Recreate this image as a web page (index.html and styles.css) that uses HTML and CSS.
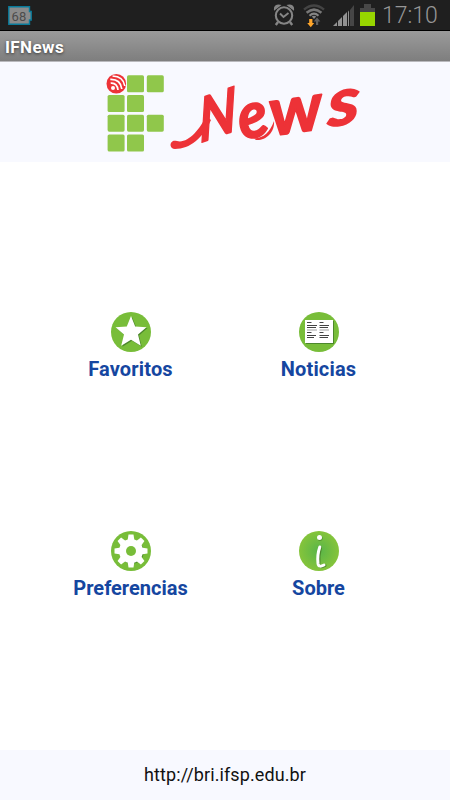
FILE: index.html
```html
<!DOCTYPE html>
<html lang="pt-BR">
<head>
    <meta charset="utf-8">
    <meta name="viewport" content="width=device-width, initial-scale=1">
    <title>IFNews</title>
    <link rel="stylesheet" href="styles.css">
</head>

<body>
    <div class="status-bar">
        <div class="battery-level">
            <svg width="24" height="20" viewBox="0 0 24 20">
                <path d="M.8 .8H21.5V5.5H23.2V14H21.5V18.2H.8Z" fill="#8b8b8b" stroke="#087b9b" stroke-width="1.4"/>
                <text x="3.6" y="14.5">68</text>
            </svg>
        </div>
        <div class="status-icons">
            <svg class="icon-alarm" width="22" height="24" viewBox="0 0 22 24" fill="none" stroke="#858585">
                <circle cx="11" cy="12.5" r="8.2" stroke-width="2.1"/>
                <path d="M7 10.5L10.5 14L15.5 10" stroke-width="1.9"/>
                <path d="M1.600 6.500C1.200 3 4 1.600 7 2.400ZM20.400 6.500C20.800 3 18 1.600 15 2.400Z" fill="#858585" stroke-width="1.400"/>
                <path d="M5 19L2.8 22M17 19L19.2 22" stroke-width="2.4"/>
            </svg>
            <svg class="icon-wifi" width="22" height="24" viewBox="0 0 22 24" fill="none">
                <path d="M1 5.6Q11-2.6 21 5.6" stroke="#444" stroke-width="2.5"/>
                <path d="M3.6 8.8Q11 2.4 18.4 8.8" stroke="#777" stroke-width="2.5"/>
                <path d="M6.5 11.7Q11 7.5 15.5 11.7" stroke="#858585" stroke-width="2.1"/>
                <path d="M8.8 12.5Q11 11 13.2 12.5L11 15Z" fill="#858585"/>
                <path d="M6.2 15H9.4V19H11.2L7.8 23.3L4.2 19H6.2Z" fill="#ffa62b"/>
                <path d="M13 21V17.5H10.7L14 13.5L17.4 17.5H15.2V21Z" fill="#606060"/>
            </svg>
            <svg class="icon-signal" width="22" height="22" viewBox="0 0 22 22">
                <path d="M0 21L4 17V21Z" fill="#929292"/>
                <path d="M5 21V16L9 12V21Z" fill="#929292"/>
                <path d="M10 21V11L14 7V21Z" fill="#929292"/>
                <path d="M15 21V6.5L16 5.5V21Z" fill="#929292"/>
                <path d="M17 21V5L21 0V21Z" fill="#464646"/>
            </svg>
            <svg class="icon-battery" width="16" height="23" viewBox="0 0 16 23">
                <path d="M4 0H11V4H15V8H0V4H4Z" fill="#484848"/>
                <path d="M0 8H15V22H0Z" fill="#97d500"/>
            </svg>
        </div>
        <span class="clock">17:10</span>
    </div>

    <div class="title-bar">IFNews</div>

    <header class="header">
        <svg class="logo" width="450" height="100" viewBox="0 62 450 100">
            <g fill="#90c74b">
                <rect x="127" y="75.3" width="17" height="17" rx="1.6"/>
                <rect x="146.8" y="75.3" width="17" height="17" rx="1.6"/>
                <rect x="107.6" y="95" width="17" height="17" rx="1.6"/>
                <rect x="127" y="95" width="17" height="17" rx="1.6"/>
                <rect x="107.6" y="114.7" width="17" height="17" rx="1.6"/>
                <rect x="127" y="114.7" width="17" height="17" rx="1.6"/>
                <rect x="146.8" y="114.7" width="17" height="17" rx="1.6"/>
                <rect x="107.6" y="134.5" width="17" height="17" rx="1.6"/>
                <rect x="127" y="134.5" width="17" height="17" rx="1.6"/>
            </g>
            <circle cx="116.3" cy="83.7" r="9.8" fill="#ed3237"/>
            <circle cx="113" cy="88" r="2" fill="#fff"/>
            <g fill="none" stroke="#fff" stroke-width="1.7">
                <path d="M110.7 83.2Q117 82.5 118 90"/>
                <path d="M110.3 79.4Q120.5 79 121.8 89"/>
                <path d="M112.5 76Q123.5 76.5 124.8 86"/>
            </g>
            <!-- tail of the N -->
            <path d="M173 141C169 143 170 149 175 149C190 149 203 138 211 120L206 116C200 130 187 144 177 141C175 140.500 174 140.500 173 141Z" fill="#ed3237"/>
            <g class="wordmark">
                <text transform="matrix(.86 -.3 .04 1.02 200 143)" font-size="60">N</text>
                <text transform="translate(242 140) rotate(-12) scale(1.02 1.08)" font-size="60">e</text>
                <text transform="translate(272 136) rotate(-8) scale(1.12 1.03)" font-size="65">w</text>
                <text transform="matrix(1.3 -.2 0 1.1 328 127)" font-size="60">s</text>
            </g>
            <!-- tail of the e -->
            <path d="M254 138.500C264 138 270 132 274 121C275 133 265 141 256 140Z" fill="#ed3237"/>
        </svg>
    </header>

    <main class="dashboard">
        <a class="item">
            <svg width="40" height="40" viewBox="0 0 40 40">
                <circle cx="20" cy="20" r="20" fill="#78bd39"/>
                <path d="M21 5L25.200 15.200L36.500 16L28 23.500L30.800 34.800L21 28.700L11.400 34.800L14 23.500L5.500 16L16.700 15.200Z" fill="#4c872c"/>
                <path d="M20 4L24.200 14.500L35.500 15.300L27 22.600L29.800 33.800L20 27.800L10.200 33.800L13 22.600L4.500 15.300L15.800 14.500Z" fill="#fff"/>
            </svg>
            <span class="label favoritos">Favoritos</span>
        </a>
        <a class="item">
            <svg width="40" height="40" viewBox="0 0 40 40">
                <circle cx="20" cy="20" r="20" fill="#78bd39"/>
                <path d="M7 9H35V32H7Z" fill="#4c872c"/>
                <path d="M6 8H34V31H6Z" fill="#fff"/>
                <g stroke="#444" stroke-width="1">
                    <path d="M8 10.500H12.500M8 13.500H18M8 15.500H17M20.500 10.500H24.500M20.500 13.500H30M20.500 15.500H29"/>
                    <path d="M8 20.500H12.500M8 23.500H17M8 25.500H15M20.500 20.500H24.500M20.500 23.500H30M20.500 25.500H29" />
                </g>
                <path d="M8 18H18M20.500 18H30" stroke="#888" stroke-width=".8"/>
            </svg>
            <span class="label noticias">Noticias</span>
        </a>
        <a class="item">
            <svg width="40" height="40" viewBox="0 0 40 40">
                <circle cx="20" cy="20" r="20" fill="#78bd39"/>
                <g fill="none" stroke="#4c872c" transform="translate(.8 .8)">
                    <circle cx="20" cy="20" r="8.500" stroke-width="7"/>
                </g>
                <g fill="#fff">
                    <g id="teeth">
                        <path id="tooth" d="M16.500 10L17.500 3.500H22.500L23.500 10Z"/>
                        <use href="#tooth" transform="rotate(90 20 20)"/>
                        <use href="#tooth" transform="rotate(180 20 20)"/>
                        <use href="#tooth" transform="rotate(270 20 20)"/>
                    </g>
                    <use href="#teeth" transform="rotate(45 20 20)"/>
                </g>
                <circle cx="20" cy="20" r="12" fill="#fff"/>
                <circle cx="20" cy="20" r="5" fill="#78bd39"/>
            </svg>
            <span class="label preferencias">Preferencias</span>
        </a>
        <a class="item">
            <svg width="40" height="40" viewBox="0 0 40 40">
                <defs>
                    <radialGradient id="info-fill">
                        <stop offset="0" stop-color="#58b548"/>
                        <stop offset="1" stop-color="#85c43b"/>
                    </radialGradient>
                </defs>
                <circle cx="20" cy="20" r="20" fill="url(#info-fill)"/>
                <circle cx="21" cy="7.300" r="2.500" fill="#4c872c"/>
                <circle cx="20.500" cy="6.500" r="2.500" fill="#fff"/>
                <path d="M21.500 16.500C20 22 19.500 28 20 33C20.500 36.500 23 36 26 34.500" fill="none" stroke="#4c872c" stroke-width="3" stroke-linecap="round"/>
                <path d="M20.800 16C19 21 18.500 28 19 32.500C19.500 36 22 35.500 25 34" fill="none" stroke="#fff" stroke-width="3" stroke-linecap="round"/>
            </svg>
            <span class="label sobre">Sobre</span>
        </a>
    </main>

    <footer class="footer">http://bri.ifsp.edu.br</footer>
</body>
</html>
```
FILE: styles.css
```css
* {
    box-sizing: border-box;
}

body {
    display: flex;
    flex-direction: column;
    height: 100vh;
    margin: 0;
    background: #fff;
    font-family: Roboto, sans-serif;
    overflow: hidden;
}

svg {
    display: block;
    flex-shrink: 0;
}

/* Android status bar */
.status-bar {
    display: flex;
    height: 31px;
    padding: 0 13px 0 8px;
    background: #1f1f1f;
    border-bottom: 1px solid #000;
}

.battery-level {
    padding-top: 6px;
}

.battery-level text {
    font-size: 13px;
    fill: #4c4c4c;
}

.status-icons {
    display: flex;
    margin-left: auto;
}

.icon-alarm {
    margin-top: 3px;
}

.icon-wifi {
    margin: 4px 0 0 8px;
}

.icon-signal {
    margin: 5px 0 0 8px;
}

.icon-battery {
    margin: 4px 0 0 5px;
}

.clock {
    width: 55px;
    margin-left: 6px;
    color: #969696;
    font-size: 23px;
    font-weight: 300;
    line-height: 31px;
    white-space: nowrap;
}

.title-bar {
    height: 31px;
    padding-left: 5px;
    background: linear-gradient(#9b9b9b, #7e7e7e);
    border-bottom: 1px solid #b9b9bd;
    color: #fff;
    font-size: 17px;
    font-weight: bold;
    letter-spacing: 0.4px;
    line-height: 32px;
    text-shadow: 0 1px 3px rgba(0, 0, 0, 0.6);
}

.header {
    height: 100px;
    background: #f8f9ff;
}

.logo {
    overflow: visible;
}

.wordmark {
    fill: #ed3237;
    stroke: #ed3237;
    stroke-width: 1.5px;
    stroke-linejoin: round;
    font-family: Lato, sans-serif;
    font-weight: bold;
    font-style: italic;
}

/* Menu */
.dashboard {
    display: grid;
    flex: 1;
    grid-template-columns: 188px 188px;
    grid-auto-rows: 219px;
    align-content: start;
    padding: 150px 0 0 36.5px;
}

.item {
    display: flex;
    flex-direction: column;
    align-items: center;
    color: #1546a0;
}

.label {
    margin-top: 5px;
    font-size: 20px;
    font-weight: bold;
    line-height: 24px;
}

.favoritos,
.noticias {
    letter-spacing: 0.15px;
}

.footer {
    height: 50px;
    background: #f8f9ff;
    color: #111;
    font-size: 18px;
    letter-spacing: 0.1px;
    line-height: 50px;
    text-align: center;
}
```
